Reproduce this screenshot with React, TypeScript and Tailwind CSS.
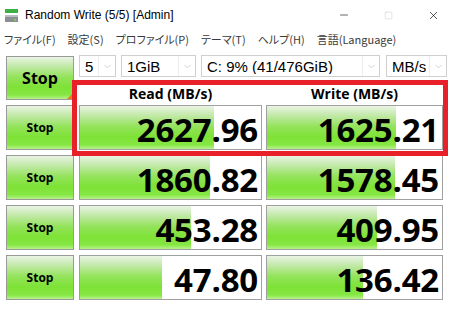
import { Minus, Square, X, ChevronDown } from "lucide-react";

type Result = {
  read: number;
  write: number;
  readFill: number;
  writeFill: number;
};

const results: Result[] = [
  { read: 2627.96, write: 1625.21, readFill: 134, writeFill: 129 },
  { read: 1860.82, write: 1578.45, readFill: 130, writeFill: 128 },
  { read: 453.28, write: 409.95, readFill: 111, writeFill: 110 },
  { read: 47.8, write: 136.42, readFill: 82, writeFill: 96 },
];

const menuItems = [
  "ファイル(F)",
  "設定(S)",
  "プロファイル(P)",
  "テーマ(T)",
  "ヘルプ(H)",
  "言語(Language)",
];

const green =
  "bg-[linear-gradient(to_bottom,#eaf4e4_0%,#c2e9a8_22%,#93e35a_48%,#7ee236_72%,#86e743_90%,#b8f28e_100%)]";

const AppIcon = () => (
  <svg width="16" height="16" viewBox="0 0 16 16">
    <rect x="1" y="1" width="13" height="4" fill="#3cb043" />
    <rect x="1" y="7" width="13" height="7" fill="#8a8f94" />
    <rect x="1" y="7" width="13" height="2" fill="#b9bdc1" />
    <rect x="10" y="11" width="2" height="1.5" fill="#7fe040" />
  </svg>
);

const Combo = ({ value, width }: { value: string; width: string }) => (
  <div
    className={`flex h-[22px] ${width} items-center border border-[#cfcfcf] bg-white`}
  >
    <span className="flex-1 truncate pl-[5px] text-[15px] leading-none text-black">
      {value}
    </span>
    <span className="flex h-full w-[17px] items-center justify-center border-l border-[#ececec] text-[#b0b0b0]">
      <ChevronDown size={11} strokeWidth={1.2} />
    </span>
  </div>
);

const StopButton = ({ big }: { big?: boolean }) => (
  <button
    className={`relative flex w-[68px] shrink-0 items-center justify-center border border-[#9a9a9a] ${green} font-bold text-black ${
      big ? "h-[44px] text-[16px]" : "h-[45px] text-[12px]"
    }`}
  >
    Stop
    {big && (
      <span className="absolute bottom-0 right-0 h-0 w-0 border-b-[6px] border-l-[6px] border-b-[#f07a1a] border-l-transparent" />
    )}
  </button>
);

const Meter = ({
  value,
  fill,
  width,
}: {
  value: number;
  fill: number;
  width: string;
}) => (
  <div
    className={`relative flex h-[45px] ${width} shrink-0 items-center justify-end overflow-hidden border border-[#a0a0a0] bg-white`}
  >
    <div
      className={`absolute inset-y-0 left-0 ${green}`}
      style={{ width: fill }}
    />
    <span className="relative pr-[3px] pt-[3px] text-[33px] font-bold leading-none tracking-[-0.2px] text-black">
      {value.toFixed(2)}
    </span>
  </div>
);

export default function App() {
  return (
    <div className="relative h-[322px] w-[450px] overflow-hidden bg-white font-['Open_Sans','Noto_Sans_CJK_JP',sans-serif]">
      {/* title bar */}
      <div className="flex h-[30px] items-center">
        <div className="ml-[4px] mr-[5px] pt-[1px]">
          <AppIcon />
        </div>
        <span className="font-['Liberation_Sans',sans-serif] text-[12px] text-black">
          Random Write (5/5) [Admin]
        </span>
        <div className="-mr-[6px] ml-auto flex h-full items-center">
          <span className="flex w-[45px] items-center justify-center text-black">
            <Minus size={12} strokeWidth={1.2} />
          </span>
          <span className="flex w-[45px] items-center justify-center text-[#c6c6c6]">
            <Square size={9} strokeWidth={1.3} />
          </span>
          <span className="flex w-[45px] items-center justify-center text-black">
            <X size={13} strokeWidth={1.2} />
          </span>
        </div>
      </div>

      {/* menu */}
      <div className="flex h-[18px] items-center gap-[12px] pl-[4px] font-['Noto_Sans_CJK_JP',sans-serif] text-[11px] leading-none text-[#3a3a3a] [font-feature-settings:'palt']">
        {menuItems.map((item) => (
          <span key={item}>{item}</span>
        ))}
      </div>

      {/* content */}
      <div className="mt-[7px] flex flex-col pl-[6px]">
        <div className="flex gap-[5px]">
          <div className="pt-[1px]">
            <StopButton big />
          </div>
          <div className="flex flex-col">
            <div className="flex font-['Liberation_Sans',sans-serif]">
              <Combo value="5" width="w-[37px]" />
              <div className="ml-[5px]">
                <Combo value="1GiB" width="w-[75px]" />
              </div>
              <div className="ml-[5px]">
                <Combo value="C: 9% (41/476GiB)" width="w-[179px]" />
              </div>
              <div className="ml-[6px]">
                <Combo value="MB/s" width="w-[61px]" />
              </div>
            </div>
            <div className="flex h-[28px] items-end pb-[4px] text-[14px] font-bold leading-none text-black">
              <span className="w-[183px] text-center">Read (MB/s)</span>
              <span className="ml-[4px] w-[177px] text-center">
                Write (MB/s)
              </span>
            </div>
          </div>
        </div>

        <div className="flex flex-col gap-[5px]">
          {results.map((r) => (
            <div key={r.read} className="flex gap-[5px]">
              <StopButton />
              <div className="flex gap-[4px]">
                <Meter value={r.read} fill={r.readFill} width="w-[183px]" />
                <Meter value={r.write} fill={r.writeFill} width="w-[177px]" />
              </div>
            </div>
          ))}
        </div>
      </div>

      {/* highlight */}
      <div className="pointer-events-none absolute left-[72px] top-[80px] h-[76px] w-[376px] border-[5px] border-[#e8202a]" />
    </div>
  );
}
